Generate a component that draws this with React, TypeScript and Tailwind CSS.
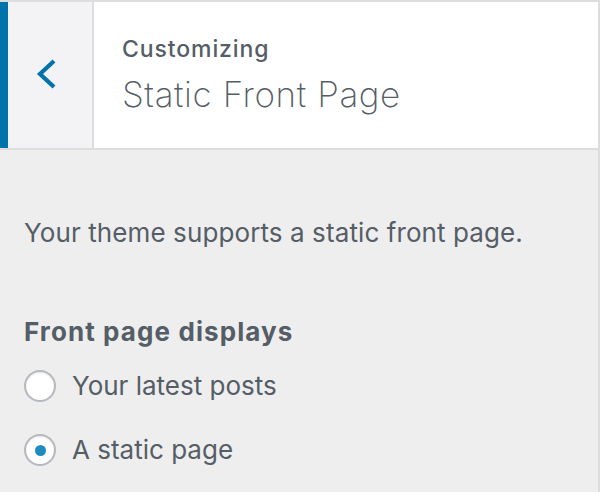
export default function App() {
  return (
    <div
      className="flex h-[492px] w-[600px] flex-col border-t-2 border-r-2 border-[#dddddd] bg-[#eeeeee] text-[#555d66]"
      style={{ fontFamily: "Inter, 'Noto Sans', sans-serif" }}
    >
      <div className="flex h-[148px] border-b-2 border-[#dddddd] bg-white">
        <button
          type="button"
          className="flex w-[94px] shrink-0 items-center border-l-8 border-r-2 border-l-[#0073aa] border-r-[#dddddd] bg-[#f3f3f5] pl-[26px]"
        >
          <svg width="24" height="32" viewBox="0 0 24 32" fill="none">
            <polyline
              points="20,2 6,15 20,28"
              stroke="#0073aa"
              strokeWidth="4.2"
              strokeLinejoin="miter"
            />
          </svg>
        </button>
        <div className="flex flex-col pl-[28px] pt-[33px]">
          <span className="text-[23px] leading-[28px] font-medium tracking-[0.9px]">Customizing</span>
          <h3 className="mt-[10px] text-[35px] leading-[42px] font-extralight tracking-[0.6px]">Static Front Page</h3>
        </div>
      </div>

      <div className="flex flex-col pl-[24px] pt-[67px]">
        <p className="text-[26px] leading-[32px] tracking-[0.1px]">Your theme supports a static front page.</p>
        <span className="mt-[67px] text-[26px] leading-[32px] font-bold tracking-[1.1px]">Front page displays</span>
        <div className="mt-[22px] flex flex-col gap-[32px]">
          <label className="flex items-center gap-[16px]">
            <span className="h-[32px] w-[32px] rounded-full border-2 border-[#b4b9be] bg-white shadow-[inset_0_1px_2px_rgba(0,0,0,0.1)]" />
            <span className="text-[26px] leading-[32px]">Your latest posts</span>
          </label>
          <label className="flex items-center gap-[16px]">
            <span className="flex h-[32px] w-[32px] items-center justify-center rounded-full border-2 border-[#b4b9be] bg-white shadow-[inset_0_1px_2px_rgba(0,0,0,0.1)]">
              <span className="h-[11px] w-[11px] rounded-full bg-[#1e8cbe]" />
            </span>
            <span className="text-[26px] leading-[32px]">A static page</span>
          </label>
        </div>
      </div>
    </div>
  );
}
